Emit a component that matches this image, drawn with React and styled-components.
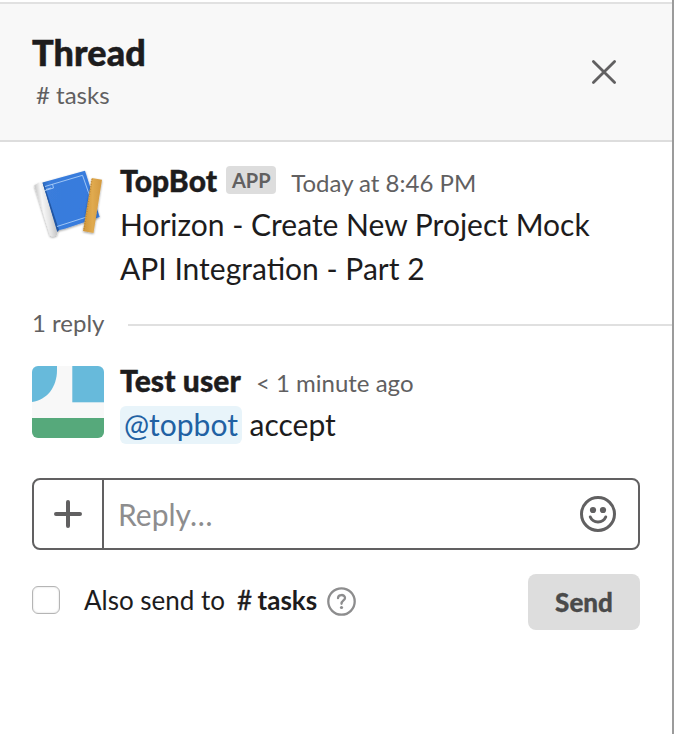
import React from "react";
import styled, { createGlobalStyle } from "styled-components";

const GlobalStyle = createGlobalStyle`
  *, *::before, *::after { box-sizing: border-box; }
  body { margin: 0; background: #fff; }
  button, input { font: inherit; }
`;

const Panel = styled.section`
  width: 674px;
  height: 734px;
  padding-top: 2px;
  overflow: hidden;
  border-right: 2px solid #9b9b9b;
  background: #fff;
  color: #1d1c1d;
  font-family: Lato, "Liberation Sans", sans-serif;
  -webkit-font-smoothing: antialiased;
`;

const Header = styled.header`
  display: flex;
  justify-content: space-between;
  height: 140px;
  padding: 26px 54px 0 32px;
  border-top: 2px solid #e1e1e1;
  border-bottom: 2px solid #dddddd;
  background: #f8f8f8;
`;

const Title = styled.h1`
  margin: 0;
  font-size: 36px;
  font-weight: 900;
  line-height: 44px;
  letter-spacing: 0.1px;
  -webkit-text-stroke: 0.5px currentColor;
`;

const Channel = styled.p`
  margin: 3px 0 0 4px;
  color: #616061;
  font-size: 24px;
  line-height: 36px;
`;

const CloseButton = styled.button`
  display: grid;
  place-items: center;
  width: 28px;
  height: 28px;
  margin-top: 28px;
  padding: 0;
  border: 0;
  background: none;
`;

const Message = styled.article`
  display: flex;
  gap: 16px;
  padding: ${(p) => p.$top}px 32px 0;
`;

const Avatar = styled.svg`
  flex: none;
  width: 72px;
  height: 72px;
  margin-top: ${(p) => p.$drop}px;
  border-radius: 6px;
`;

const MessageHead = styled.div`
  display: flex;
  align-items: baseline;
  height: 44px;
  line-height: 44px;
`;

const Author = styled.strong`
  font-size: 30px;
  font-weight: 900;
  letter-spacing: 0.1px;
  -webkit-text-stroke: 0.4px currentColor;
`;

const AppBadge = styled.span`
  align-self: flex-start;
  width: 50px;
  height: 28px;
  margin: 8px 0 0 9px;
  border-radius: 4px;
  background: #dddddd;
  color: #616061;
  font-size: 20px;
  font-weight: 700;
  line-height: 29px;
  text-align: center;
`;

const Time = styled.time`
  margin-left: 15px;
  color: #616061;
  font-size: 24px;
`;

const Body = styled.p`
  margin: 0;
  font-size: 30px;
  line-height: 44px;
`;

const Mention = styled.span`
  padding: 0 4px 2px;
  border-radius: 6px;
  background: #e8f4fa;
  color: #2161a3;
`;

const ReplyCount = styled.div`
  display: grid;
  grid-template-columns: 96px 1fr;
  align-items: center;
  height: 36px;
  margin-top: 15px;
  padding-left: 32px;
  color: #616061;
  font-size: 24px;
  line-height: 36px;
`;

const Rule = styled.div`
  height: 2px;
  margin-top: 3px;
  background: #e0e0e0;
`;

const Composer = styled.div`
  display: flex;
  align-items: center;
  width: 608px;
  height: 72px;
  margin: 32px 0 0 32px;
  border: 2px solid #616061;
  border-radius: 8px;
`;

const AttachButton = styled.button`
  display: grid;
  place-items: center;
  width: 70px;
  height: 68px;
  padding: 0;
  border: 0;
  border-right: 2px solid #616061;
  background: none;
`;

const ReplyInput = styled.input`
  flex: 1;
  min-width: 0;
  height: 44px;
  padding: 0 0 0 14px;
  border: 0;
  outline: 0;
  background: none;
  font-size: 30px;
  &::placeholder { color: #8d8d8e; opacity: 1; }
`;

const EmojiButton = styled.button`
  display: grid;
  width: 36px;
  height: 36px;
  margin-right: 22px;
  padding: 0;
  border: 0;
  background: none;
`;

const Footer = styled.footer`
  display: flex;
  align-items: center;
  height: 56px;
  margin: 24px 32px 0;
`;

const Checkbox = styled.input`
  appearance: none;
  width: 28px;
  height: 28px;
  margin: -4px 24px 0 0;
  border: 1px solid #b5b5b5;
  border-radius: 6px;
  background: #fff;
  box-shadow: inset 0 0 2px #d2d2d2;
`;

const Label = styled.label`
  font-size: 26px;
  line-height: 40px;
  margin-top: -4px;
  white-space: pre;
`;

const LabelChannel = styled.strong`
  margin-left: 12px;
  font-weight: 700;
`;

const Hash = styled.span`
  display: inline-block;
  width: 20.5px;
  font-weight: 400;
  -webkit-text-stroke: 0.4px currentColor;
`;

const HelpIcon = styled.svg`
  margin: -2px 0 0 9.5px;
`;

const SendButton = styled.button`
  width: 112px;
  height: 56px;
  margin-left: auto;
  padding: 0;
  border: 0;
  border-radius: 8px;
  background: #dddddd;
  color: #4a4a4a;
  font-size: 26px;
  font-weight: 900;
  -webkit-text-stroke: 0.3px currentColor;
`;

function BlueprintAvatar() {
  return (
    <Avatar $drop={10} viewBox="0 0 72 72">
      <defs>
        <linearGradient id="roll" x1="0" y1="0.3" x2="1" y2="0">
          <stop offset="0" stopColor="#b8b8b8" />
          <stop offset="0.3" stopColor="#f6f6f6" />
          <stop offset="0.5" stopColor="#e4e4e4" />
          <stop offset="1" stopColor="#a0a0a1" />
        </linearGradient>
        <linearGradient id="sheet" x1="0" y1="0" x2="1" y2="0.2">
          <stop offset="0" stopColor="#2462b5" />
          <stop offset="0.15" stopColor="#3a7ddb" />
          <stop offset="1" stopColor="#367ade" />
        </linearGradient>
        <linearGradient id="wood" x1="0" y1="0" x2="1" y2="0">
          <stop offset="0" stopColor="#d09639" />
          <stop offset="0.5" stopColor="#e0aa4f" />
          <stop offset="1" stopColor="#d3993e" />
        </linearGradient>
        <filter id="shade" x="-20%" y="-20%" width="140%" height="140%">
          <feDropShadow dx="0" dy="1" stdDeviation="1.3" floodOpacity="0.4" />
        </filter>
      </defs>
      <g filter="url(#shade)">
        <path d="M2.3 17.5 Q5.5 14.5 10.5 14.5 L25.5 61 L25 67 Q21 69.5 18 67.5 Z" fill="url(#roll)" />
        <path d="M10.5 14.5 L53 2.7 L67.7 49 L33.5 60.5 L25.3 62.5 Z" fill="url(#sheet)" />
        <path d="M10.5 14.5 L13 19 L27 62 L25.3 64 Z" fill="#2257a3" />
      </g>
      <path d="M13 18.5 L50.5 7.3 L64 46 L25 58.5 M13 22.5 L21.5 20 L20.5 16 M14 21.5 L19 20" fill="none" stroke="#a9cdf7" strokeWidth="0.9" />
      <path d="M59.8 10 L70 11.7 L61.5 65 L51 63 Z" fill="url(#wood)" filter="url(#shade)" />
      <path d="M60 11 L52 62" fill="none" stroke="#b57f33" strokeWidth="1.4" strokeDasharray="0.7 1.8" />
    </Avatar>
  );
}

function UserAvatar() {
  return (
    <Avatar $drop={8} viewBox="0 0 72 72">
      <rect width="72" height="72" fill="#f8f8f8" />
      <path d="M0 0 H25 V4 C25 21 15 34 0 36 Z" fill="#67badb" />
      <rect x="40.3" width="31.7" height="36.3" fill="#67badb" />
      <rect y="52" width="72" height="20" fill="#56a97b" />
    </Avatar>
  );
}

export default function App() {
  return (
    <>
      <GlobalStyle />
      <Panel>
        <Header>
          <div>
            <Title>Thread</Title>
            <Channel># tasks</Channel>
          </div>
          <CloseButton aria-label="Close">
            <svg width="28" height="28" fill="none" stroke="#616061" strokeWidth="2.8" strokeLinecap="round">
              <path d="M3.4 3.4 L24.6 24.6 M24.6 3.4 L3.4 24.6" />
            </svg>
          </CloseButton>
        </Header>

        <Message $top={16}>
          <BlueprintAvatar />
          <div>
            <MessageHead>
              <Author>TopBot</Author>
              <AppBadge>APP</AppBadge>
              <Time>Today at 8:46 PM</Time>
            </MessageHead>
            <Body>Horizon - Create New Project Mock<br />API Integration - Part 2</Body>
          </div>
        </Message>

        <ReplyCount>
          <span>1 reply</span>
          <Rule />
        </ReplyCount>

        <Message $top={17}>
          <UserAvatar />
          <div>
            <MessageHead>
              <Author>Test user</Author>
              <Time>&lt; 1 minute ago</Time>
            </MessageHead>
            <Body><Mention>@topbot</Mention> accept</Body>
          </div>
        </Message>

        <Composer>
          <AttachButton aria-label="Attach">
            <svg width="28" height="28" fill="none" stroke="#616061" strokeWidth="4" strokeLinecap="round">
              <path d="M14 2 V26 M2 14 H26" />
            </svg>
          </AttachButton>
          <ReplyInput placeholder="Reply…" />
          <EmojiButton aria-label="Emoji">
            <svg width="36" height="36" fill="none" stroke="#616061" strokeWidth="3" strokeLinecap="round">
              <circle cx="18" cy="18" r="16.5" />
              <path d="M10.3 21 C13 27.5 23 27.5 25.7 21" />
              <circle cx="13" cy="14" r="3.1" fill="#616061" stroke="none" />
              <circle cx="23" cy="14" r="3.1" fill="#616061" stroke="none" />
            </svg>
          </EmojiButton>
        </Composer>

        <Footer>
          <Checkbox type="checkbox" id="also-send" />
          <Label htmlFor="also-send">Also send to<LabelChannel><Hash>#</Hash>tasks</LabelChannel></Label>
          <HelpIcon width="29" height="29" fill="none" stroke="#8d8d8e" strokeWidth="2.3" strokeLinecap="round">
            <circle cx="14.5" cy="14.5" r="13.2" />
            <path d="M11 11.2 C11 7 18 7 18 11 C18 13.5 14.5 13.5 14.5 16.8" />
            <circle cx="14.5" cy="20.5" r="1.6" fill="#8d8d8e" stroke="none" />
          </HelpIcon>
          <SendButton>Send</SendButton>
        </Footer>
      </Panel>
    </>
  );
}
